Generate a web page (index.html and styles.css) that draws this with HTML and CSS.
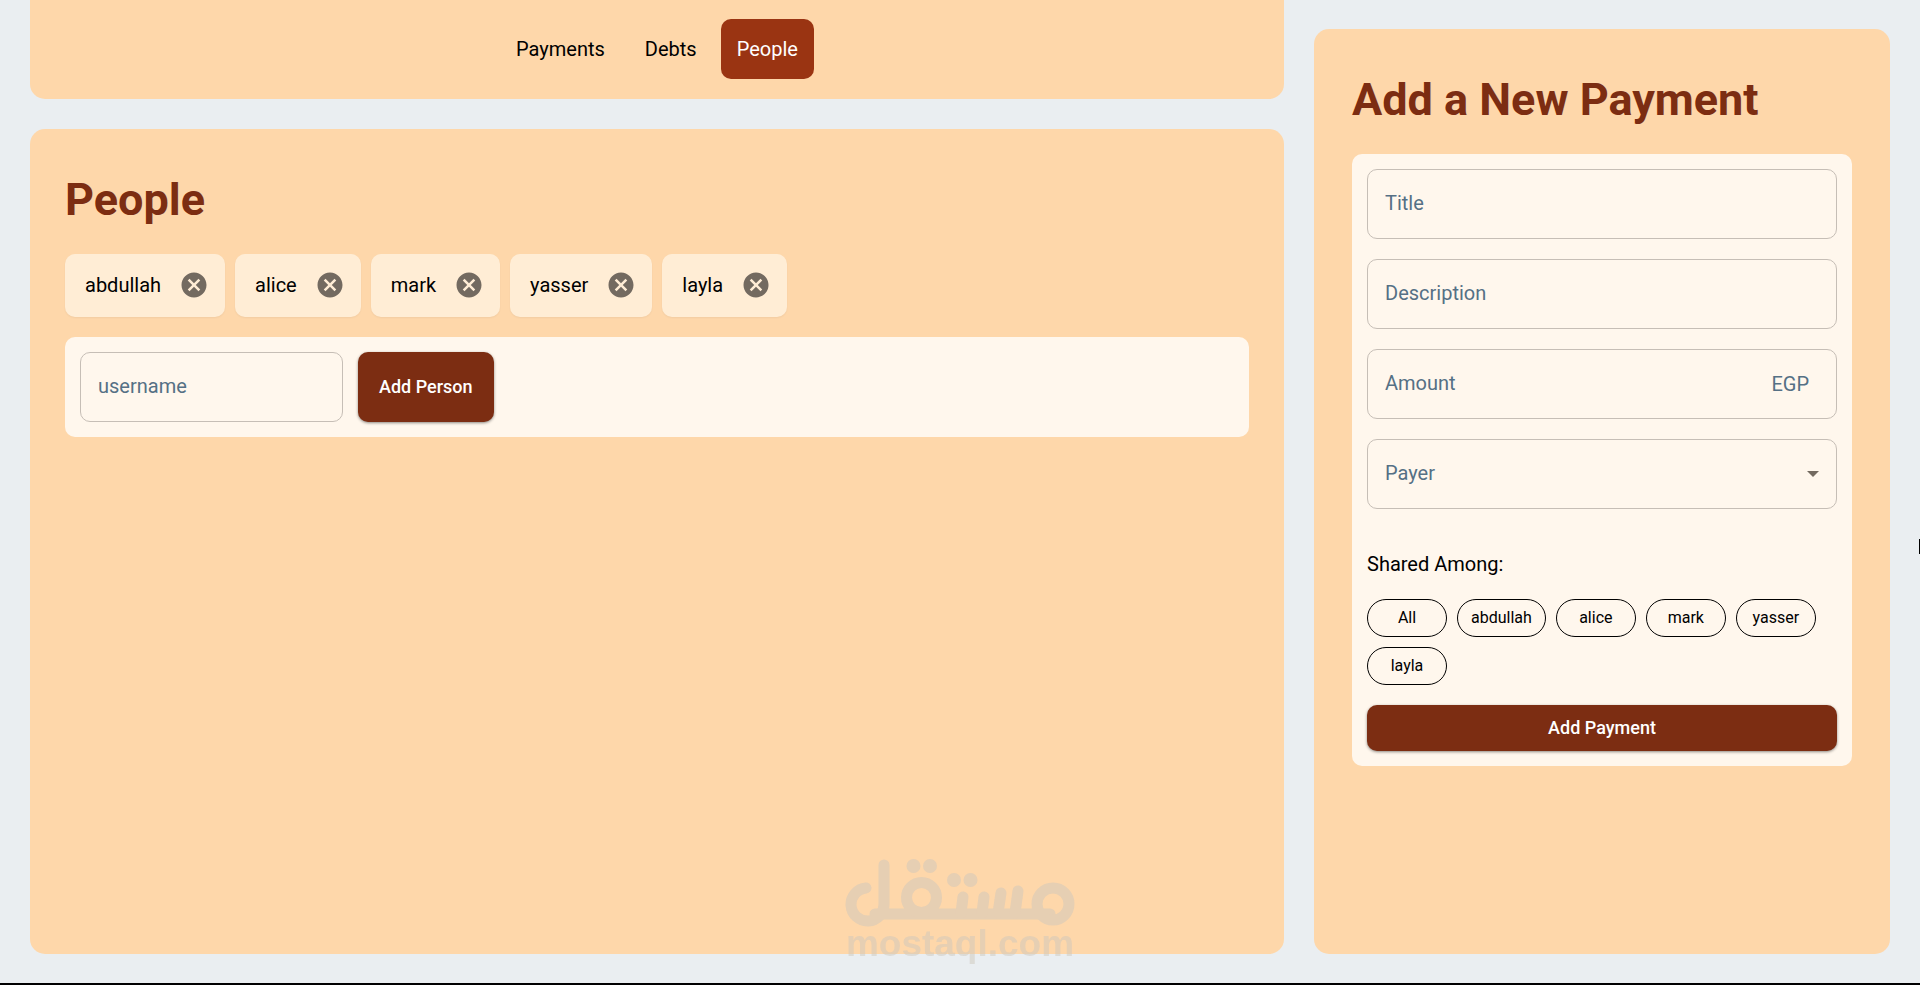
FILE: index.html
```html
<!DOCTYPE html>
<html lang="en">
<head>
  <meta charset="UTF-8" />
  <meta name="viewport" content="width=device-width, initial-scale=1.0"/>
  <title>People</title>
  <link rel="stylesheet" href="styles.css">
</head>
<body>
  <svg class="sprite" aria-hidden="true">
    <symbol id="icon-cancel" viewBox="0 0 24 24">
      <path d="M12 2C6.47 2 2 6.47 2 12s4.47 10 10 10 10-4.47 10-10S17.53 2 12 2zm5 13.59L15.59 17 12 13.41 8.41 17 7 15.59 10.59 12 7 8.41 8.41 7 12 10.59 15.59 7 17 8.41 13.41 12 17 15.59z"/>
    </symbol>
  </svg>

  <div class="page">
    <div class="main-col">
      <nav class="panel tabs">
        <a href="#payments" class="tab">Payments</a>
        <a href="#debts" class="tab">Debts</a>
        <a href="#people" class="tab active">People</a>
      </nav>

      <main class="panel people" id="people">
        <h1>People</h1>
        <ul class="people-list">
          <li class="person">abdullah <button type="button" class="remove" aria-label="Remove abdullah"><svg><use href="#icon-cancel"/></svg></button></li>
          <li class="person">alice <button type="button" class="remove" aria-label="Remove alice"><svg><use href="#icon-cancel"/></svg></button></li>
          <li class="person">mark <button type="button" class="remove" aria-label="Remove mark"><svg><use href="#icon-cancel"/></svg></button></li>
          <li class="person">yasser <button type="button" class="remove" aria-label="Remove yasser"><svg><use href="#icon-cancel"/></svg></button></li>
          <li class="person">layla <button type="button" class="remove" aria-label="Remove layla"><svg><use href="#icon-cancel"/></svg></button></li>
        </ul>
        <form class="card add-person">
          <input type="text" class="field username" placeholder="username" aria-label="username" />
          <button type="submit" class="btn">Add Person</button>
        </form>
      </main>
    </div>

    <aside class="panel new-payment">
      <h1>Add a New Payment</h1>
      <form class="card payment-form">
        <input type="text" class="field" placeholder="Title" aria-label="Title" />
        <input type="text" class="field" placeholder="Description" aria-label="Description" />
        <div class="amount">
          <input type="text" class="field" id="amount" inputmode="decimal" placeholder="Amount" aria-label="Amount" />
          <label for="amount">EGP</label>
        </div>
        <div class="select-wrap">
          <select class="field" aria-label="Payer">
            <option value="">Payer</option>
            <option>abdullah</option>
            <option>alice</option>
            <option>mark</option>
            <option>yasser</option>
            <option>layla</option>
          </select>
          <svg class="arrow" viewBox="0 0 12 6" aria-hidden="true"><path d="M0 0h12L6 6z"/></svg>
        </div>

        <p class="shared-title">Shared Among:</p>
        <div class="shared-list">
          <button type="button" class="chip">All</button>
          <button type="button" class="chip">abdullah</button>
          <button type="button" class="chip">alice</button>
          <button type="button" class="chip">mark</button>
          <button type="button" class="chip">yasser</button>
          <button type="button" class="chip">layla</button>
        </div>
        <button type="submit" class="btn">Add Payment</button>
      </form>
    </aside>
  </div>

  <div class="edge-mark"></div>

  <div class="watermark">
    <svg viewBox="0 0 230 68" role="img" aria-label="مستقل">
      <g fill="none" stroke="currentColor" stroke-width="11" stroke-linecap="round">
        <path d="M21 29A16.500 16.500 0 1 0 39 45V6"/>
        <path d="M30 55H205"/>
        <circle cx="76.500" cy="38.500" r="15"/>
        <path d="M118 38l-2 16M139 38l-2 16M156 34l-3 20M173 32l-3 22"/>
        <circle cx="208" cy="45" r="16"/>
      </g>
      <g fill="currentColor">
        <circle cx="68.500" cy="7" r="7"/>
        <circle cx="85" cy="7" r="7"/>
        <circle cx="109" cy="21" r="7"/>
        <circle cx="125.500" cy="21" r="7"/>
      </g>
    </svg>
    <span>mostaql.com</span>
  </div>
</body>
</html>
```
FILE: styles.css
```css
* {
  box-sizing: border-box;
}
body {
  margin: 0;
  font-family: Roboto, sans-serif;
  font-size: 20px;
  line-height: 30px;
  color: #000;
  background: #eaeef1;
}
.sprite {
  display: none;
}
.page {
  display: grid;
  grid-template-columns: minmax(0, 1fr) 30vw;
  gap: 30px;
  min-height: 100vh;
  padding: 0 30px 29px;
  border-bottom: 2px solid #000;
}
.main-col {
  display: flex;
  flex-direction: column;
  gap: 30px;
}
.panel {
  background: #fed7aa;
  border-radius: 15px;
}
h1 {
  margin: 0 0 21px;
  font-size: 45px;
  line-height: 66px;
  font-weight: 700;
  color: #7c2d12;
}

/* tabs */
.tabs {
  display: flex;
  justify-content: center;
  gap: 8px;
  padding: 19px 0 20px;
  border-radius: 0 0 15px 15px;
}
.tab {
  padding: 15px 16px;
  border-radius: 10px;
  color: #000;
  text-decoration: none;
}
.tab.active {
  background: #9a3412;
  color: #fff;
}

/* people */
.people {
  flex: 1;
  padding: 38px 35px;
}
.people-list {
  display: flex;
  flex-wrap: wrap;
  gap: 10px;
  margin: 0 0 20px;
  padding: 0;
  list-style: none;
}
.person {
  display: flex;
  align-items: center;
  gap: 18px;
  height: 63px;
  padding: 0 16px 1px 20px;
  background: #ffedd5;
  border-radius: 10px;
  box-shadow: 0 1px 2px rgba(0, 0, 0, 0.05);
}
.remove {
  width: 30px;
  height: 30px;
  padding: 0;
  border: none;
  background: none;
  color: #736a60;
  cursor: pointer;
}
.remove svg {
  display: block;
  width: 30px;
  height: 30px;
  fill: currentColor;
}
.card {
  padding: 15px;
  background: #fff7ed;
  border-radius: 10px;
}
.add-person {
  display: flex;
  gap: 15px;
}

/* form controls */
.field {
  display: block;
  width: 100%;
  height: 70px;
  padding: 0 17px 2px;
  border: 1px solid #c6beb6;
  border-radius: 10px;
  background: transparent;
  font: inherit;
  color: #557085;
}
.field::placeholder {
  color: #557085;
  opacity: 1;
}
.username {
  width: 263px;
}
.btn {
  padding: 0 21px 2px;
  border: none;
  border-radius: 10px;
  background: #7c2d12;
  box-shadow: 0 1px 3px rgba(0, 0, 0, 0.45);
  color: #fff;
  font-family: inherit;
  font-size: 18px;
  font-weight: 500;
  cursor: pointer;
}
.new-payment {
  margin-top: 29px;
  padding: 38px;
}
.payment-form {
  display: flex;
  flex-direction: column;
  gap: 20px;
}
.payment-form .btn {
  height: 46px;
}
.amount,
.select-wrap {
  display: grid;
  align-items: center;
}
.amount > *,
.select-wrap > * {
  grid-area: 1 / 1;
}
.amount label {
  justify-self: end;
  margin-right: 28px;
  color: #557085;
}
.select-wrap select {
  appearance: none;
}
.arrow {
  justify-self: end;
  width: 12px;
  height: 6px;
  margin-right: 18px;
  fill: #736a60;
  pointer-events: none;
}
.shared-title {
  margin: 20px 0 0;
}
.shared-list {
  display: flex;
  flex-wrap: wrap;
  gap: 10px;
}
.chip {
  min-width: 80px;
  height: 38px;
  padding: 0 13px 2px;
  border: 1px solid #000;
  border-radius: 19px;
  background: none;
  font-family: inherit;
  font-size: 16px;
  color: #000;
  cursor: pointer;
}

/* small dark mark on the right edge of the window */
.edge-mark {
  position: fixed;
  top: 539px;
  right: 0;
  width: 1px;
  height: 15px;
  background: #000;
}

/* watermark sits over the bottom of the page */
.watermark {
  position: fixed;
  bottom: 24px;
  left: 50%;
  transform: translateX(-50%);
  width: 230px;
  color: #cec7bc;
  opacity: 0.5;
  text-align: center;
  pointer-events: none;
}
.watermark svg {
  display: block;
  width: 230px;
  height: 68px;
}
.watermark span {
  display: block;
  font-family: "Liberation Sans", Arial, sans-serif;
  font-size: 37px;
  line-height: 34px;
  font-weight: 700;
}
```
